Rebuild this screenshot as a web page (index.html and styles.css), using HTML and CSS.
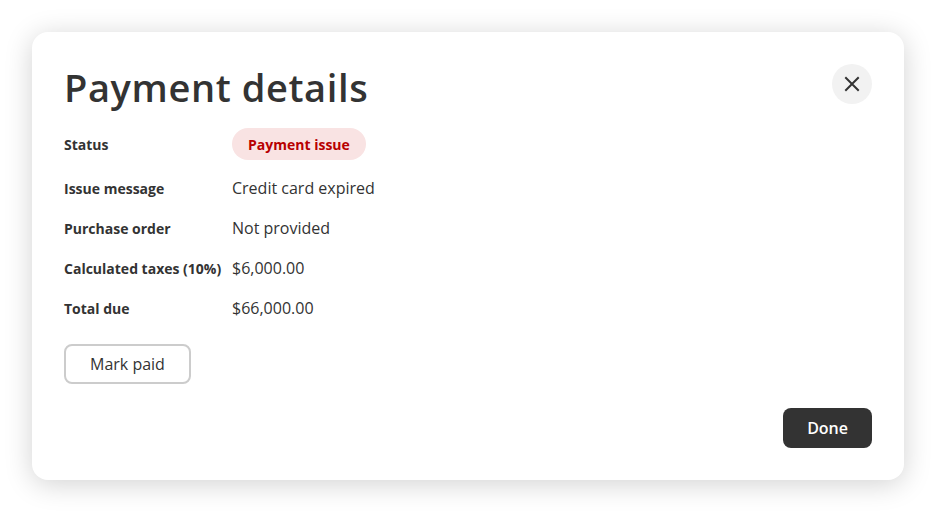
FILE: index.html
```html
<!DOCTYPE html>
<html>
<head>
<meta charset="utf-8">
<link rel="stylesheet" href="styles.css">
</head>
<body>
<div class="dialog">
  <div class="header">
    <h1 class="title">Payment details</h1>
    <button class="close" aria-label="Close">
      <svg width="16" height="16" viewBox="0 0 16 16"><path d="M2 2 L14 14 M14 2 L2 14" stroke="#333" stroke-width="2" fill="none" stroke-linecap="square"/></svg>
    </button>
  </div>
  <div class="rows">
    <div class="row status-row"><div class="label">Status</div><div class="value"><span class="pill">Payment issue</span></div></div>
    <div class="row"><div class="label">Issue message</div><div class="value">Credit card expired</div></div>
    <div class="row"><div class="label">Purchase order</div><div class="value">Not provided</div></div>
    <div class="row"><div class="label">Calculated taxes (10%)</div><div class="value">$6,000.00</div></div>
    <div class="row"><div class="label">Total due</div><div class="value">$66,000.00</div></div>
  </div>
  <button class="btn-outline">Mark paid</button>
  <div class="footer"><button class="btn-primary">Done</button></div>
</div>
</body>
</html>
```
FILE: styles.css
```css
* { box-sizing: border-box; }
html, body { margin: 0; background: #fff; }
body { font-family: "Open Sans", "Liberation Sans", sans-serif; color: #333; padding: 32px; }
.dialog {
  width: 872px;
  height: 448px;
  background: #fff;
  border-radius: 16px;
  box-shadow: 0 4px 28px rgba(0,0,0,0.18);
  padding: 32px;
  display: flex;
  flex-direction: column;
}
.header { display: flex; justify-content: space-between; align-items: center; height: 40px; }
.title { margin: 0; padding-top: 6px; height: 40px; font-family: "Open Sans", sans-serif; font-weight: 600; font-size: 38px; line-height: 34px; color: #333; letter-spacing: 0.6px; }
.close { width: 40px; height: 40px; border-radius: 50%; border: none; background: #f2f2f2; display: flex; align-items: center; justify-content: center; padding: 0; }
.rows { margin-top: 16px; display: flex; flex-direction: column; }
.row { display: grid; grid-template-columns: 168px 1fr; align-items: center; padding: 8px 0; min-height: 40px; }
.label { font-size: 14px; font-weight: 700; color: #333; }
.value { font-size: 16px; color: #333; }
.pill { display: inline-flex; align-items: center; height: 32px; padding: 0 16px; border-radius: 16px; background: #f9e3e3; color: #b80000; font-weight: 700; font-size: 14px; }
.btn-outline { margin-top: 16px; align-self: flex-start; height: 40px; padding: 0 24px; border: 2px solid #ccc; border-radius: 8px; background: #fff; font-family: "Open Sans", sans-serif; font-size: 16px; font-weight: 500; color: #333; }
.footer { margin-top: auto; display: flex; justify-content: flex-end; }
.btn-primary { height: 40px; padding: 0 24px; border: none; border-radius: 8px; background: #333; color: #fff; font-family: "Open Sans", sans-serif; font-size: 16px; font-weight: 600; }
```
